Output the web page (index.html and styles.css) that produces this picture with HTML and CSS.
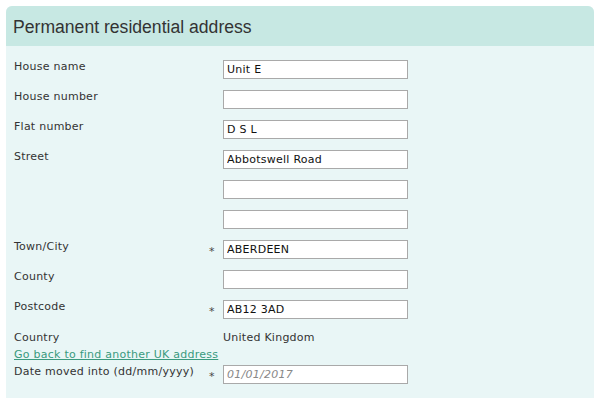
FILE: index.html
```
<!DOCTYPE html>
<html>
<head>
<meta charset="utf-8">
<link rel="stylesheet" href="styles.css">
</head>
<body>
<div class="panel">
  <div class="panel-head">Permanent residential address</div>
  <div class="panel-body">
    <div class="row"><span class="label">House name</span><span class="req"></span><input class="field" type="text" value="Unit E"></div>
    <div class="row"><span class="label">House number</span><span class="req"></span><input class="field" type="text" value=""></div>
    <div class="row"><span class="label">Flat number</span><span class="req"></span><input class="field" type="text" value="D S L"></div>
    <div class="row"><span class="label">Street</span><span class="req"></span><input class="field" type="text" value="Abbotswell Road"></div>
    <div class="row"><span class="label"></span><span class="req"></span><input class="field" type="text" value=""></div>
    <div class="row"><span class="label"></span><span class="req"></span><input class="field" type="text" value=""></div>
    <div class="row"><span class="label">Town/City</span><span class="req">*</span><input class="field" type="text" value="ABERDEEN"></div>
    <div class="row"><span class="label">County</span><span class="req"></span><input class="field" type="text" value=""></div>
    <div class="row"><span class="label">Postcode</span><span class="req">*</span><input class="field" type="text" value="AB12 3AD"></div>
    <div class="row row-text"><span class="label">Country</span><span class="req"></span><span class="value">United Kingdom</span></div>
    <div class="link-row"><a class="back-link" href="#">Go back to find another UK address</a></div>
    <div class="row row-last"><span class="label">Date moved into (dd/mm/yyyy)</span><span class="req">*</span><input class="field" type="text" placeholder="01/01/2017"></div>
  </div>
</div>
</body>
</html>
```
FILE: styles.css
```
html, body {
  margin: 0;
  padding: 0;
  background: #ffffff;
}
body {
  padding: 6px;
  font-family: "DejaVu Sans", Verdana, sans-serif;
  font-size: 11px;
  letter-spacing: 0.25px;
  color: #333333;
}
.panel {
  width: 588px;
  border-radius: 6px 6px 0 0;
  overflow: hidden;
  background: #e9f6f6;
}
.panel-head {
  height: 40px;
  box-sizing: border-box;
  padding: 10px 0 0 7px;
  background: #c7e8e3;
  font-family: "Liberation Sans", Arial, sans-serif;
  font-size: 17.6px;
  letter-spacing: 0;
  line-height: 22px;
  color: #333333;
}
.panel-body {
  padding: 14px 0 14px 8px;
}
.row {
  display: flex;
  align-items: flex-start;
  margin-bottom: 11px;
}
.row-last {
  margin-bottom: 0;
}
.label {
  width: 195px;
  line-height: 13px;
}
.req {
  width: 14px;
  text-align: left;
  padding-top: 5px;
  line-height: 13px;
  color: #444444;
  font-size: 11px;
}
.field {
  box-sizing: border-box;
  width: 185px;
  height: 19px;
  margin: 0;
  padding: 0 3px;
  border: 1px solid #a9a9a9;
  background: #ffffff;
  font-family: "DejaVu Sans", Verdana, sans-serif;
  font-size: 11px;
  letter-spacing: 0.25px;
  color: #111111;
  outline: none;
}
.field::placeholder {
  color: #888888;
  font-style: italic;
}
.row-text {
  margin-bottom: 4px;
}
.row-text .label, .value {
  line-height: 13px;
  padding-top: 1px;
}
.link-row {
  line-height: 13px;
  margin-bottom: 4px;
}
.back-link {
  color: #3a9a7e;
  text-decoration: underline;
}
```
